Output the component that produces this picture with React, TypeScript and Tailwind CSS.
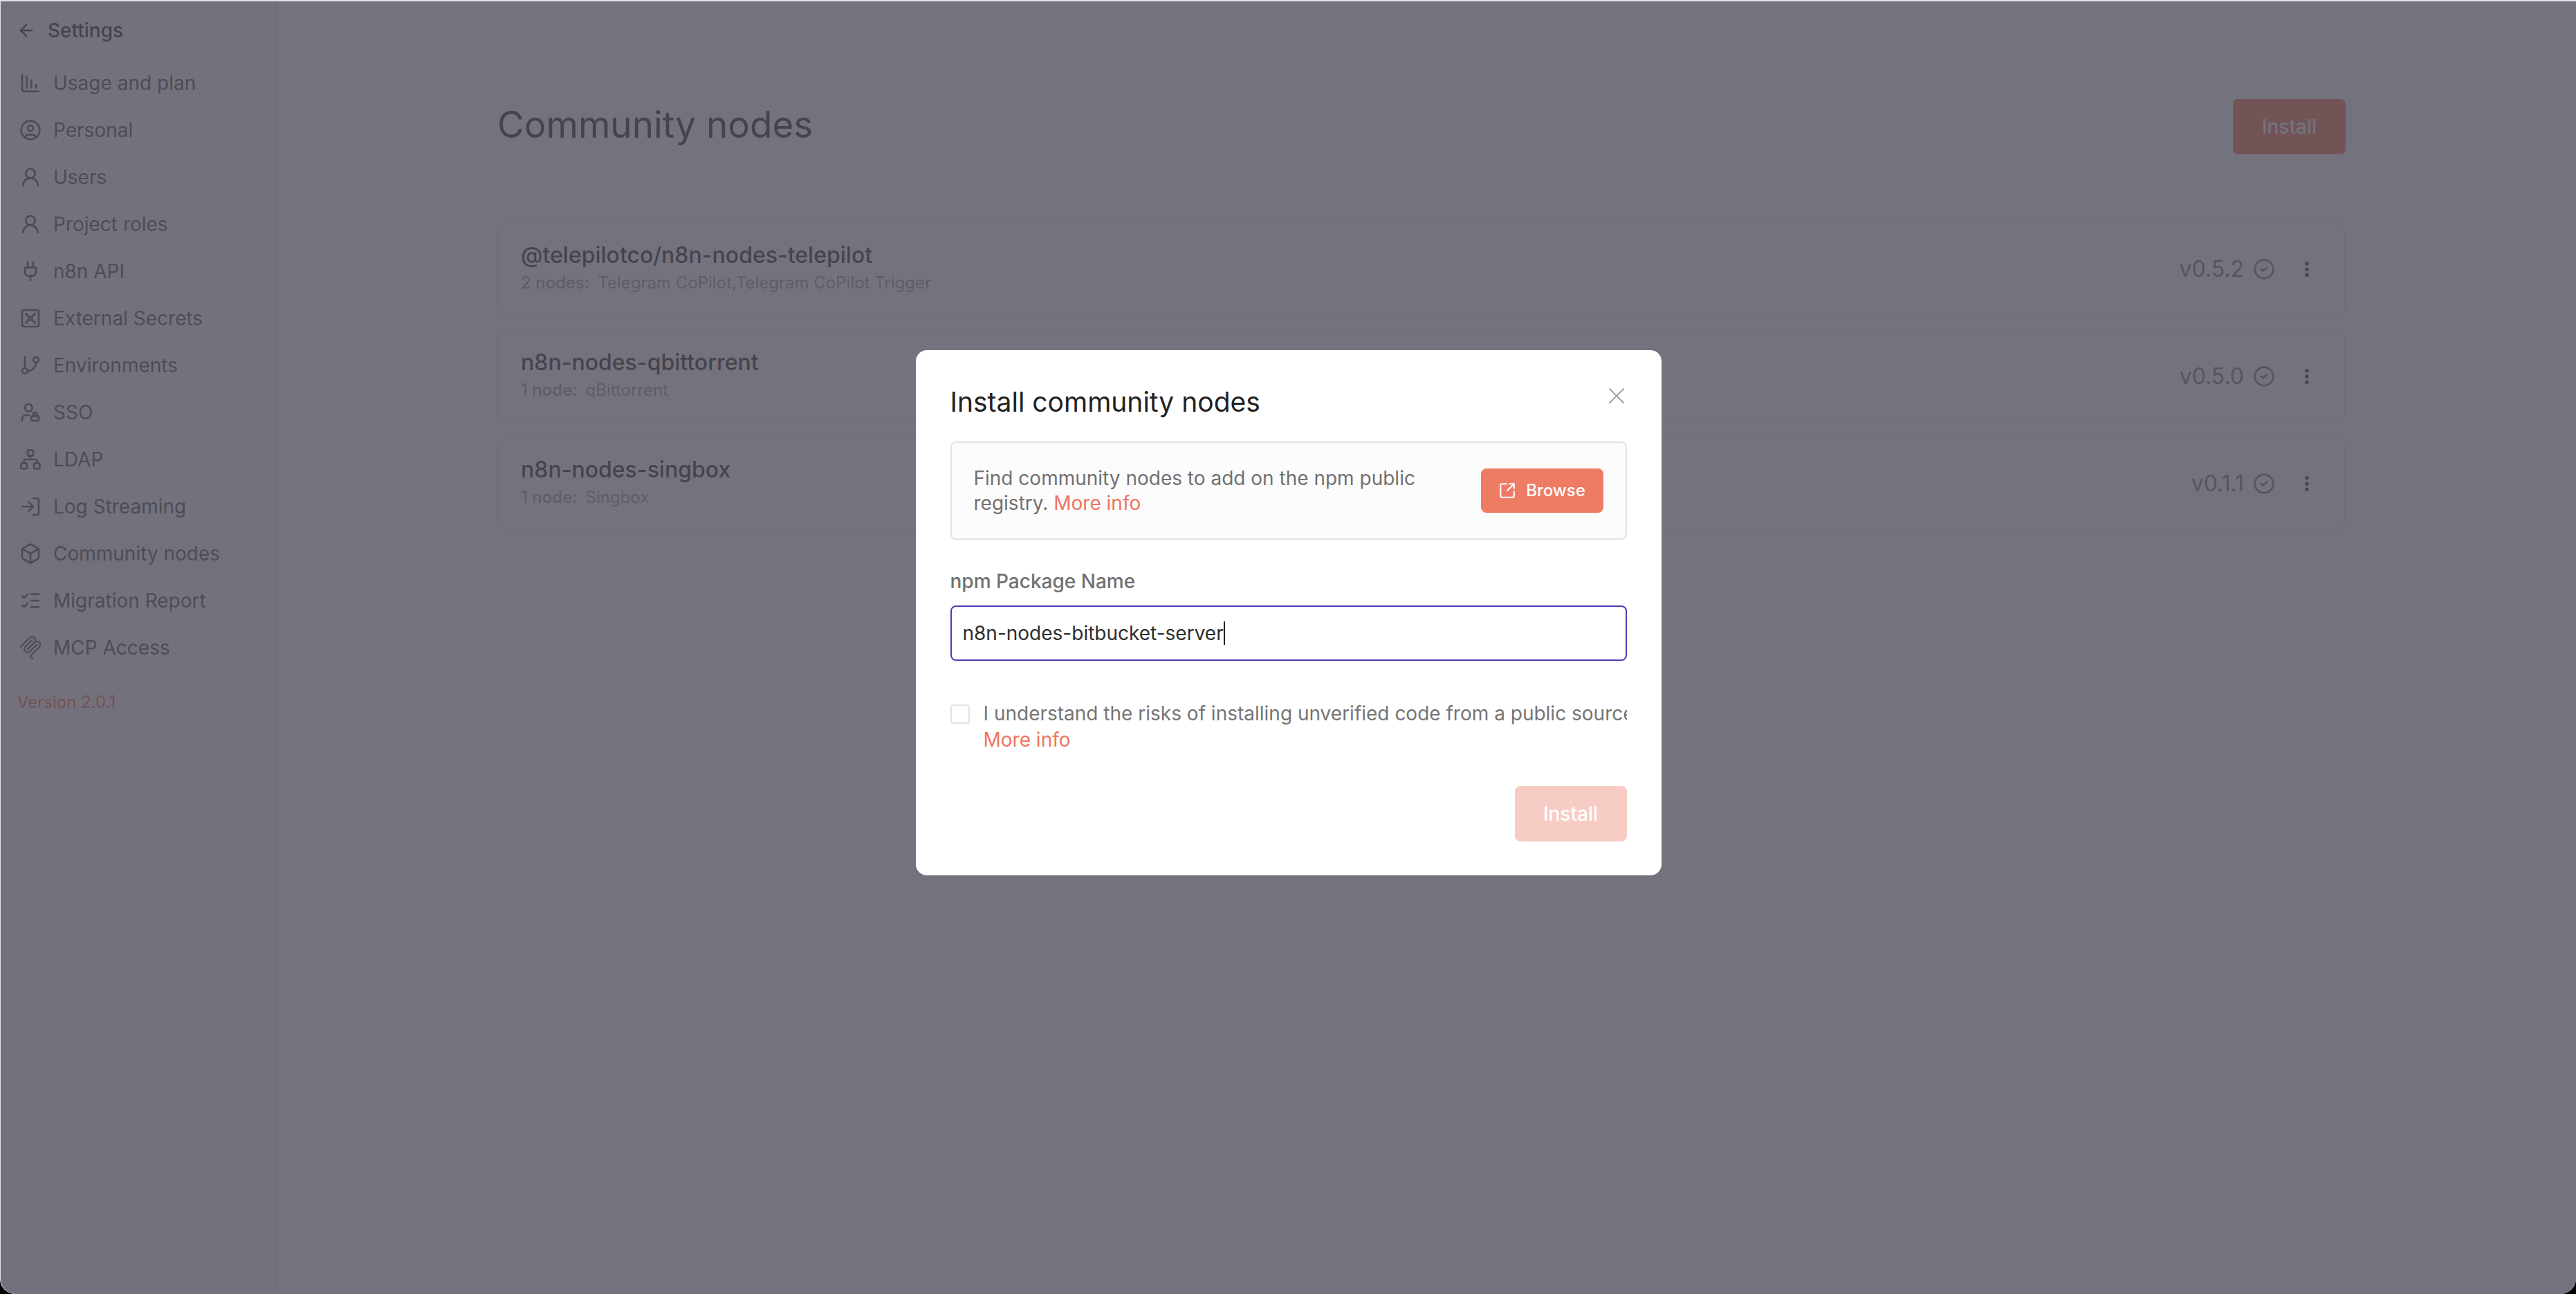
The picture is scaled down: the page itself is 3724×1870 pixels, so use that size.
import {
  ArrowLeft,
  Box,
  ChartColumnDecreasing,
  CircleCheck,
  CircleUser,
  EllipsisVertical,
  GitBranch,
  ListChecks,
  LogIn,
  Network,
  Plug,
  SquareArrowOutUpRight,
  UserLock,
  UserRound,
  Vault,
  X,
} from "lucide-react";

function McpIcon({ className }: { className?: string }) {
  return (
    <svg viewBox="0 0 180 180" fill="none" stroke="currentColor" strokeWidth="11" strokeLinecap="round" className={`${className} scale-[1.12]`}>
      <path d="M18 84.8528L85.8822 16.9706C95.2548 7.59798 110.451 7.59798 119.823 16.9706C129.196 26.3431 129.196 41.5391 119.823 50.9117L68.5581 102.177" />
      <path d="M69.2652 101.47L119.823 50.9117C129.196 41.5391 144.392 41.5391 153.765 50.9117L154.118 51.2652C163.491 60.6378 163.491 75.8338 154.118 85.2063L92.7248 146.6C89.6006 149.724 89.6006 154.789 92.7248 157.913L105.331 170.52" />
      <path d="M102.853 33.9411L52.6482 84.1457C43.2756 93.5183 43.2756 108.714 52.6482 118.087C62.0208 127.459 77.2167 127.459 86.5893 118.087L136.794 67.8822" />
    </svg>
  );
}

const menu = [
  { icon: ChartColumnDecreasing, label: "Usage and plan" },
  { icon: CircleUser, label: "Personal" },
  { icon: UserRound, label: "Users" },
  { icon: UserRound, label: "Project roles" },
  { icon: Plug, label: "n8n API" },
  { icon: Vault, label: "External Secrets" },
  { icon: GitBranch, label: "Environments" },
  { icon: UserLock, label: "SSO" },
  { icon: Network, label: "LDAP" },
  { icon: LogIn, label: "Log Streaming" },
  { icon: Box, label: "Community nodes", active: true },
  { icon: ListChecks, label: "Migration Report" },
  { icon: McpIcon, label: "MCP Access" },
];

const packages = [
  { name: "@telepilotco/n8n-nodes-telepilot", count: "2 nodes:", nodes: "Telegram CoPilot,Telegram CoPilot Trigger", version: "v0.5.2" },
  { name: "n8n-nodes-qbittorrent", count: "1 node:", nodes: "qBittorrent", version: "v0.5.0" },
  { name: "n8n-nodes-singbox", count: "1 node:", nodes: "Singbox", version: "v0.1.1" },
];

function Sidebar() {
  return (
    <aside className="w-[399px] shrink-0 border-r-2 border-[#f0f0f0] bg-[#fbfbfb] px-[12px] pt-[22px]">
      <div className="flex h-[40px] items-center gap-[17px] pl-[11px] text-[28px] font-medium text-[#444444]">
        <ArrowLeft size={28} strokeWidth={2} />
        <span>Settings</span>
      </div>
      <nav className="mt-[28px] flex flex-col gap-[12px]">
        {menu.map((item) => (
          <div
            key={item.label}
            className={`flex h-[56px] items-center gap-[17px] rounded-[8px] pl-[15px] text-[28px] text-[#666666] ${item.active ? "bg-[#f8f8f8]" : ""}`}
          >
            <item.icon className="h-[32px] w-[32px] shrink-0" strokeWidth={2} />
            <span>{item.label}</span>
          </div>
        ))}
      </nav>
      <div className="mt-[35px] pl-[12px] text-[24px] leading-[32px] text-[#ff7a62]">Version 2.0.1</div>
    </aside>
  );
}

function PackageCard({ name, count, nodes, version }: (typeof packages)[number]) {
  return (
    <div className="flex h-[138px] items-center justify-between rounded-[16px] border-2 border-[#eeeeee] bg-white pl-[32px] pr-[40px]">
      <div className="pb-[4px]">
        <div className="text-[32px] font-medium leading-[40px] text-[#444444]">{name}</div>
        <div className="mt-[4px] flex gap-[12px] text-[24px] leading-[32px] text-[#a8a8a8]">
          <span className="font-medium">{count}</span>
          <span>{nodes}</span>
        </div>
      </div>
      <div className="flex items-center">
        <span className="text-[32px] text-[#888888]">{version}</span>
        <CircleCheck size={32} strokeWidth={2} className="ml-[13px] text-[#888888]" />
        <EllipsisVertical size={28} strokeWidth={2.5} className="ml-[32px] text-[#444444]" />
      </div>
    </div>
  );
}

function InstallDialog() {
  return (
    <div className="w-[1078px] rounded-[16px] bg-white px-[50px] pb-[49px] pt-[50px]">
      <div className="relative">
        <h2 className="text-[39px] leading-[50px] text-[#222222]">Install community nodes</h2>
        <X size={40} strokeWidth={1.2} className="absolute right-[-5px] top-[-4px] text-[#a0a0a0]" />
      </div>
      <div className="mt-[32px] flex h-[142px] items-center justify-between rounded-[8px] border-2 border-[#e2e2e2] bg-[#fcfcfc] pl-[32px] pr-[32px]">
        <p className="w-[660px] text-[28px] leading-[36px] text-[#717171]">
          Find community nodes to add on the npm public registry. <span className="text-[#ef7560]">More info</span>
        </p>
        <div className="flex h-[64px] w-[177px] items-center justify-center gap-[14px] rounded-[8px] bg-[#ee7c64] text-[24px] font-medium text-white">
          <SquareArrowOutUpRight size={26} strokeWidth={2} />
          <span>Browse</span>
        </div>
      </div>
      <label className="mt-[42px] block text-[28px] font-medium leading-[36px] text-[#717171]">npm Package Name</label>
      <div className="mt-[17px] flex h-[80px] items-center rounded-[8px] border-2 border-[#4b3eb8] bg-white pl-[16px] text-[28px] text-[#2d2e2e]">
        <span>n8n-nodes-bitbucket-server</span>
        <span className="h-[34px] w-[2px] bg-[#222222]" />
      </div>
      <div className="mt-[57px] flex">
        <div className="mt-[6px] h-[28px] w-[28px] shrink-0 rounded-[4px] border-2 border-[#e2e2e2] bg-white" />
        <div className="ml-[20px] min-w-0 overflow-hidden whitespace-nowrap text-[28px] leading-[38px] text-[#757575]">
          <div>I understand the risks of installing unverified code from a public source</div>
          <div className="text-[#ef7560]">More info</div>
        </div>
      </div>
      <div className="mt-[48px] flex justify-end">
        <div className="flex h-[80px] w-[162px] items-center justify-center rounded-[8px] bg-[#f7ccc4] text-[28px] font-medium text-white">Install</div>
      </div>
    </div>
  );
}

export default function App() {
  return (
    <div className="bg-black font-['Inter',sans-serif]">
      <div className="relative flex h-screen overflow-hidden rounded-b-[22px] border-l border-t-2 border-[#e2e2e2] bg-white">
        <Sidebar />
        <main className="flex-1 pl-[319px] pr-[333px] pt-[141px]">
          <div className="flex h-[80px] items-center justify-between">
            <h1 className="pb-[6px] text-[53px] leading-[64px] text-[#444444]">Community nodes</h1>
            <div className="flex h-[80px] w-[163px] items-center justify-center rounded-[8px] bg-[#f57f66] text-[28px] font-medium text-white">Install</div>
          </div>
          <div className="mt-[97px] flex flex-col gap-[17px]">
            {packages.map((pkg) => (
              <PackageCard key={pkg.name} {...pkg} />
            ))}
          </div>
        </main>
        {/* dialog overlay */}
        <div className="absolute inset-0 flex items-start justify-center bg-[rgba(70,68,82,0.75)] pt-[504px]">
          <InstallDialog />
        </div>
      </div>
    </div>
  );
}
